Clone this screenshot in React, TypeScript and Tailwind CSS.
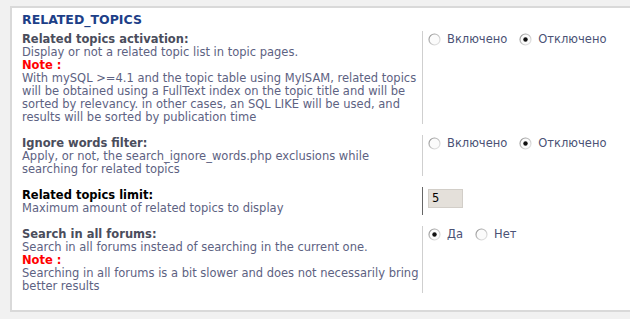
import React from 'react';

const Radio: React.FC<{ checked?: boolean; id: string }> = ({ checked, id }) => (
  <svg width="13" height="13" viewBox="0 0 13 13" className="shrink-0">
    <defs>
      <linearGradient id={id} x1="0" y1="0" x2="1" y2="1">
        <stop offset="0" stopColor="#8a8a8a" />
        <stop offset="0.5" stopColor="#c4c4c4" />
        <stop offset="1" stopColor="#ececec" />
      </linearGradient>
    </defs>
    <circle cx="6.5" cy="6.5" r="5.5" fill="#fbfbfb" stroke={`url(#${id})`} strokeWidth="1.2" />
    {checked && <circle cx="6.5" cy="6.5" r="2.2" fill="#111" />}
  </svg>
);

const RadioGroup: React.FC<{ options: { label: string; checked?: boolean }[]; name: string }> = ({ options, name }) => (
  <div className="flex items-center gap-[12px] pt-[2px]">
    {options.map((o, i) => (
      <label key={i} className="flex items-center gap-[6px] text-[#4b5275]">
        <Radio checked={o.checked} id={`${name}-${i}`} />
        <span>{o.label}</span>
      </label>
    ))}
  </div>
);

const Note: React.FC = () => <div className="font-bold text-[#ff0000]">Note :</div>;

const Row: React.FC<{ children: React.ReactNode; right: React.ReactNode; dark?: boolean }> = ({ children, right, dark }) => (
  <div className="flex mb-[11px]">
    <div className="w-[400px] pt-[2px]">{children}</div>
    <div className={`border-l pl-[5px] ${dark ? 'border-[#666]' : 'border-[#cfcfcf]'}`}>{right}</div>
  </div>
);

const App: React.FC = () => {
  return (
    <div
      className="min-h-screen bg-[#f1f1f1] pt-[6px] pl-[10px] overflow-hidden text-[11.5px] leading-[13px]"
      style={{ fontFamily: '"DejaVu Sans", Verdana, sans-serif' }}
    >
      <div className="w-[640px] h-[306px] bg-white border-2 border-[#d9d9d9] pl-[10px] pt-[3px]">
        <h2 className="text-[12.5px] leading-[17px] font-bold text-[#1d3f88] mb-[3px]">RELATED_TOPICS</h2>

        <Row
          right={
            <RadioGroup
              name="act"
              options={[{ label: 'Включено' }, { label: 'Отключено', checked: true }]}
            />
          }
        >
          <div className="font-bold text-[#4a4d5c]">Related topics activation:</div>
          <div className="text-[#5d6282]">Display or not a related topic list in topic pages.</div>
          <Note />
          <div className="text-[#5d6282]">
            With mySQL &gt;=4.1 and the topic table using MyISAM, related topics
            <br />
            will be obtained using a FullText index on the topic title and will be
            <br />
            sorted by relevancy. in other cases, an SQL LIKE will be used, and
            <br />
            results will be sorted by publication time
          </div>
        </Row>

        <Row
          right={
            <RadioGroup
              name="ign"
              options={[{ label: 'Включено' }, { label: 'Отключено', checked: true }]}
            />
          }
        >
          <div className="font-bold text-[#4a4d5c]">Ignore words filter:</div>
          <div className="text-[#5d6282]">
            Apply, or not, the search_ignore_words.php exclusions while
            <br />
            searching for related topics
          </div>
        </Row>

        <Row
          dark
          right={
            <div className="pt-[2px]">
              <div className="w-[35px] h-[19px] bg-[#e4e0da] border border-[#d2cec8] pl-[3px] leading-[17px] text-black">
                5
              </div>
            </div>
          }
        >
          <div className="font-bold text-black">Related topics limit:</div>
          <div className="text-[#5d6282]">Maximum amount of related topics to display</div>
        </Row>

        <Row
          right={
            <RadioGroup name="all" options={[{ label: 'Да', checked: true }, { label: 'Нет' }]} />
          }
        >
          <div className="font-bold text-[#4a4d5c]">Search in all forums:</div>
          <div className="text-[#5d6282]">Search in all forums instead of searching in the current one.</div>
          <Note />
          <div className="text-[#5d6282]">
            Searching in all forums is a bit slower and does not necessarily bring
            <br />
            better results
          </div>
        </Row>
      </div>
    </div>
  );
};

export default App;
